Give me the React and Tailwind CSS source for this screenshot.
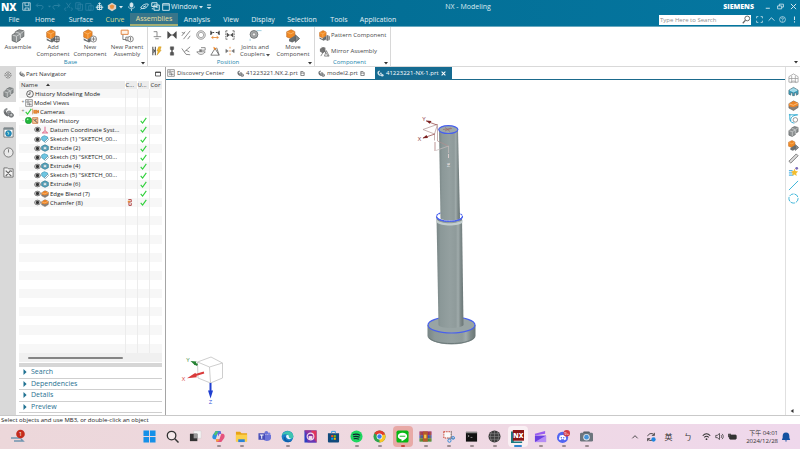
import React from "react";

/* ---------- drawing helpers ---------- */
function Ic({ s = "size-3", children }) {
  return (
    <svg viewBox="0 0 12 12" className={`${s} shrink-0`} fill="none" stroke="currentColor" strokeWidth="1" aria-hidden="true">
      {children}
    </svg>
  );
}
const Caret = ({ c = "size-1" }) => (
  <svg viewBox="0 0 4 4" className={`${c} shrink-0`} fill="currentColor" aria-hidden="true"><path d="M0 1h4L2 3.4z" /></svg>
);
const Bracket = ({ s }) => (
  <Ic s={s}>
    <path d="M4.500 1C1.500 1.600.4 3.600.8 5.600 1.200 8 3 9.600 5.400 10.400L7 8.800C5 8 3.800 6.800 3.400 5.200 3.200 4 3.800 3 5 2.600z" fill="#6b6e70" stroke="none" />
    <ellipse cx="6.600" cy="6" rx="2.200" ry="1.700" fill="#9a9d9f" stroke="#5d6062" strokeWidth=".700" />
    <ellipse cx="9" cy="9" rx="2.500" ry="2.200" fill="#85888a" stroke="#5d6062" strokeWidth=".700" />
    <ellipse cx="9" cy="8.600" rx="1.100" ry=".800" fill="#e6e8e8" stroke="none" />
    <path d="M2 5c0-1.400.8-2.400 2.200-2.900" stroke="#c8cccd" strokeWidth=".700" />
  </Ic>
);
const GreyPart = ({ s }) => (
  <Ic s={s}>
    <path d="M1 5l2.600-1.400V2.400L7 .6l4 1v4.800L8 8v1.400L4.600 11.400 1 10z" fill="#8d9192" stroke="#5d6162" strokeWidth=".7" />
    <path d="M1.300 5.200l3.400 1 3.300-2 3-2.400M4.700 6.400v4.600M8 4.400v4.200M3.800 2.600l3.400 1v1" stroke="#d9dcdc" strokeWidth=".7" />
  </Ic>
);
const OrangePart = ({ s, star }) => (
  <Ic s={s}>
    <path d="M.6 2.6L4.4.6l3.4 1.6v4L4.2 8.6.6 7z" fill="#f08a24" stroke="#b8601a" strokeWidth=".5" />
    <path d="M.8 2.800l3.400 1.400 3.400-2M4.200 4.200v4" stroke="#fbc07c" strokeWidth=".6" />
    <path d="M.6 8l3.400 2V8.800l4-2.200L9 7v2L5.200 11.600.6 9.600z" fill="#6b6f70" stroke="none" />
    {star ? (
      <><circle cx="9" cy="8.600" r="2.600" fill="#f6f6f6" stroke="#777" strokeWidth=".7" /><path d="M9 6.800v3.600M7.200 8.600h3.600" stroke="#666" strokeWidth=".6" /></>
    ) : (
      <path d="M7.400 6.600h3.800v4.200H7.400zM9.300 5.600v6.200M6.400 8.700h5.400" fill="#e8e8e8" stroke="#555" strokeWidth=".7" />
    )}
  </Ic>
);
const MovePart = ({ s }) => (
  <Ic s={s}>
    <path d="M.6 2.400L4.400.6l3.200 1.600v4L4.200 8.200.6 6.800z" fill="#f08a24" stroke="#b8601a" strokeWidth=".5" />
    <path d="M.8 2.600l3.400 1.600 3.200-2" stroke="#fbc07c" strokeWidth=".6" />
    <path d="M2.600 8.800l4.400-2.800 1.600.6v3L5.400 11.600 2.600 10.600z" fill="#6b6f70" stroke="none" />
    <path d="M8 5l3.600 3.200L8 11.400z" fill="#8a8e8f" stroke="#4b4f50" strokeWidth=".6" />
  </Ic>
);
const PlainOrange = ({ s }) => (
  <Ic s={s}>
    <path d="M1 4l5-3 5 2.400v4.800L6 11.400 1 8.800z" fill="#8a8078" stroke="#5e5650" strokeWidth=".6" />
    <path d="M1 4l5-3 5 2.400v3L5.600 8 1 6.800z" fill="#ee8526" stroke="none" />
    <path d="M1.400 4.200l4.400 1.600 5-2.400" stroke="#ffd09a" strokeWidth=".8" />
  </Ic>
);
const Eye = () => (
  <Ic s="size-[7px]">
    <ellipse cx="6" cy="6" rx="5" ry="4" fill="#e0e0e0" stroke="#555" strokeWidth="1.200" />
    <circle cx="6" cy="6" r="2.800" fill="#333" stroke="none" />
  </Ic>
);
const Check = () => (
  <Ic s="size-[7px]"><path d="M1.200 6.600l3.200 3.800L10.800 1.400" stroke="#2fd03a" strokeWidth="1.900" /></Ic>
);
const SketchI = () => (
  <Ic s="size-2">
    <path d="M1 3l4-2 5 2v4L5 10 1 7z" fill="#6fc6e2" stroke="#2385a8" strokeWidth=".8" />
    <path d="M5 10l5-5 1.400 1.600-4.600 4.600z" fill="#fff" stroke="#3a6f86" strokeWidth=".8" />
  </Ic>
);
const ExtrudeI = () => (
  <Ic s="size-2">
    <path d="M1 3.600l5-2.400 5 2.400v5L6 11 1 8.600z" fill="#4ea9c6" stroke="#2d6f86" strokeWidth="1" />
    <path d="M3.500 5l2.500-1.200L8.500 5v2.400L6 8.600 3.500 7.400z" fill="#d7eef5" stroke="#6d7d84" strokeWidth=".8" />
  </Ic>
);
const DatumI = () => (
  <Ic s="size-2"><path d="M6 1v6M6 7l-4 3.400M6 7l4 3.400M2 10.400h8" stroke="#d8476f" strokeWidth="1.200" /></Ic>
);
const SquareSmile = () => (
  <Ic s="size-2">
    <path d="M1 1h10v10H1z" stroke="#666" />
    <path d="M3 3h3v3H3zM7 4h3M3 8h7M7 6v4" stroke="#666" />
  </Ic>
);

/* ---------- title bar ---------- */
const menu = [
  ["File", "w-7"], ["Home", "w-[34px]"], ["Surface", "w-[38px]"], ["Curve", "w-[30px]"], ["Assemblies", "w-12"],
  ["Analysis", "w-[38px]"], ["View", "w-[30px]"], ["Display", "w-[34px]"], ["Selection", "w-11"], ["Tools", "w-[30px]"], ["Application", "w-12"],
];
function QBtn({ w = "w-[11px]", label, dim, children }) {
  return (
    <button aria-label={label} className={`${w} flex h-3 items-center justify-center ${dim ? "text-[#2f83a5]" : "text-[#d5e8ef]"}`}>
      {children}
    </button>
  );
}
function Header() {
  return (
    <header className="border-b border-[#69a9bf] bg-linear-to-r from-[#00658a] via-[#036f96] to-[#0577a1] text-white">
      <div className="relative flex h-[13px] items-center">
        <span className="w-[21px] pl-px text-[10px] leading-3 font-extrabold">NX</span>
        <QBtn label="Save"><Ic s="size-[9px]"><path d="M1 1h10v10H1zM4 1v4h5V1M4 11V8h5v3" /></Ic></QBtn>
        <QBtn w="w-[15px]" label="Undo" dim><Ic s="size-[9px]"><path d="M4 2L1.600 4.600 4 7M2 4.600h6c4 0 3 5 0 5" strokeWidth="1.200" /></Ic></QBtn>
        <QBtn w="w-1" label="Undo list" dim><Caret c="size-[3px]" /></QBtn>
        <QBtn label="Redo" dim><Ic s="size-[9px]"><path d="M8 2l2.400 2.600L8 7M10 4.600H4c-4 0-3 5 0 5" strokeWidth="1.200" /></Ic></QBtn>
        <QBtn w="w-3" label="Cut" dim><Ic s="size-[9px]"><path d="M9 1L4 8M3 1l5 7M3 8a1.600 1.600 0 100 3M9 8a1.600 1.600 0 110 3" /></Ic></QBtn>
        <QBtn w="w-[10px]" label="Copy" dim><Ic s="size-[9px]"><path d="M1 1h6v8H1zM4 3h6v8H4z" /></Ic></QBtn>
        <QBtn w="w-[10px]" label="Paste" dim><Ic s="size-[9px]"><path d="M1 2h7v9H1zM5 5h6v6H5z" /></Ic></QBtn>
        <QBtn w="w-[10px]" label="Move"><Ic s="size-[9px]"><path d="M6 1v10M1 7h10M4 3l2-2 2 2M3 5h6v5H3z" strokeWidth="1.300" /></Ic></QBtn>
        <QBtn w="w-[15px]" label="Touch mode">
          <Ic s="size-[10px]"><path d="M1 4l5-3 5 3v4l-5 3-5-3z" fill="#dcd0c2" stroke="none" /><path d="M3 4.600L6 3l3 1.600L7.600 8H4.400z" fill="#e8903f" stroke="none" /></Ic>
        </QBtn>
        <QBtn w="w-1" label="Mode list"><Caret c="size-[4px]" /></QBtn>
        <QBtn w="w-4" label="Voice"><Ic s="size-[9px]"><rect x="4" y="1" width="4" height="6" rx="2" fill="currentColor" /><path d="M2 6c0 4 8 4 8 0M6 9v3" /></Ic></QBtn>
        <QBtn label="Erase"><Ic s="size-[9px]"><path d="M1 8c2-5 8-6 10-5-1 5-7 7-10 5zM4 7l4-2M1 10l2-2" strokeWidth="1.300" /></Ic></QBtn>
        <QBtn label="Switch window"><Ic s="size-[9px]"><path d="M1 1h7v5H1zM4 4h7v7H4zM6 7h3M1 9h2" strokeWidth="1.300" /></Ic></QBtn>
        <button className="flex h-3 items-center gap-px pl-px text-[7px] leading-3 text-[#e4f0f4]">
          <Ic s="size-[8px]"><path d="M1 1h10v10H1zM1 3h10" strokeWidth="1.300" /></Ic>Window
        </button>
        <QBtn w="w-2" label="Window list"><Caret c="size-[4px]" /></QBtn>
        <QBtn w="w-2" label="Customize"><Ic s="size-[6px]"><path d="M2 2h8" strokeWidth="2" /><path d="M1 6h10L6 10z" fill="currentColor" stroke="none" /></Ic></QBtn>
        <h1 className="pointer-events-none absolute inset-x-0 pl-[136px] text-center text-[7px] leading-[13px] text-[#dcebf1]">NX - Modeling</h1>
        <div className="ml-auto flex items-center">
          <span className="mr-[7px] text-[7px] leading-3 font-extrabold">SIEMENS</span>
          <QBtn w="w-[13px]" label="Minimize"><Ic s="size-[7px]"><path d="M3 9h7" strokeWidth="1.600" /></Ic></QBtn>
          <QBtn w="w-[13px]" label="Restore"><Ic s="size-[7px]"><path d="M1 5h7v5H1zM4 5V2h7v5H8" strokeWidth="1.400" /></Ic></QBtn>
          <QBtn w="w-[13px]" label="Close"><Ic s="size-[7px]"><path d="M1.500 1.500l9 9M10.500 1.500l-9 9" strokeWidth="1.700" /></Ic></QBtn>
        </div>
      </div>
      <div className="flex h-[13px] items-center">
        <nav className="flex h-full">
          {menu.map(([m, w]) => (
            <button key={m} className={`${w} text-center text-[7px] ${
              m === "Assemblies" ? "border-b-2 border-[#a3ad72] bg-[#37758a] leading-[11px] text-[#e8dfa0]" : m === "Curve" ? "leading-[13px] text-[#dcd98f]" : "leading-[13px] text-[#e3f0f5]"}`}>{m}</button>
          ))}
        </nav>
        <label className="ml-auto flex h-[10px] w-[92px] items-center bg-white text-[#666]">
          <input aria-label="Type Here to Search" placeholder="Type Here to Search" className="w-0 flex-1 pl-px text-[6px] leading-[10px] outline-none placeholder:text-[#8f8f8f]" />
          <Ic s="size-[9px]"><circle cx="7" cy="4.600" r="3.200" strokeWidth="1.300" /><path d="M4.600 7L1 11" strokeWidth="1.500" /></Ic>
        </label>
        <div className="flex w-[49px] pl-[3px]">
          <QBtn label="Full screen"><Ic s="size-[7px]"><path d="M1 4V1h3M8 1h3v3M11 8v3H8M4 11H1V8" strokeWidth="1.300" /></Ic></QBtn>
          <QBtn w="w-3" label="Collapse ribbon"><Ic s="size-[7px]"><path d="M1 8l5-5 5 5" strokeWidth="1.500" /></Ic></QBtn>
          <QBtn w="w-[11px]" label="Help"><Ic s="size-[7px]"><circle cx="6" cy="6" r="5" strokeWidth="1.200" /><path d="M4.200 4.600c.4-2 3.800-1.600 3.400.4L6 6.600v1M6 8.500v1" strokeWidth="1.200" /></Ic></QBtn>
          <QBtn w="w-3" label="Alerts"><Ic s="size-[7px]"><path d="M6 1v6M6 9v2" strokeWidth="1.800" /></Ic></QBtn>
        </div>
      </div>
    </header>
  );
}

/* ---------- ribbon ---------- */
function Big({ w, icon, lines, drop }) {
  return (
    <button className={`${w} flex flex-col items-center pt-px text-[6px] leading-[7px] text-[#4a4a4a]`}>
      <span className="mb-px flex h-[15px] items-center">{icon}</span>
      {lines.map((l, i) => (
        <span key={l} className="flex items-center gap-px whitespace-nowrap">{l}{drop && i === 1 && <Caret />}</span>
      ))}
    </button>
  );
}
const bow = "M1 2l4 4-4 4zM11 2L7 6l4 4z";
const constraints = [
  ["Distance", <path d="M2 2h4v6M2 8h9M4 10.500h4" stroke="#777" />],
  ["Align", <><path d={bow} fill="#4a4a4a" stroke="#4a4a4a" /><path d="M4 6h4" /></>],
  ["Parallel", <path d="M1 7l4-5M8 11l3-4M3 11l8-10M1 3l3 1" stroke="#777" />],
  ["Concentric", <><circle cx="6" cy="6" r="5" stroke="#777" /><circle cx="6" cy="6" r="3.200" stroke="#999" /></>],
  ["Center", <><path d="M1 1v5M11 1v5M3 3h2M7 3h2M2 5V2M10 5V2" stroke="#444" strokeWidth="1.300" /><path d="M2 9h8M4 7.500L2 9l2 1.500M8 7.500L10 9l-2 1.500" stroke="#e8862c" /></>],
  ["Fit", <><path d="M1 1v10M11 1v10M1 1h2M9 1h2M1 11h2M9 11h2" stroke="#555" strokeDasharray="2 1" /><path d="M2.500 3.500L5 6 2.500 8.500zM9.500 3.500L7 6l2.500 2.500zM4 6h4" fill="#444" stroke="#444" strokeWidth=".600" /></>],
  ["Bond", <><path d="M1 1v10M4 1v10M1 4l3 2-3 2" stroke="#555" strokeWidth="1.300" /><path d="M8 1h3L9.600 5H11L6 11l1.400-5H6z" fill="#f2b62c" stroke="#c28a12" strokeWidth=".500" /></>],
  ["Lock", <path d="M4 1h4v3L6 6 4 4zM4 11h4V8L6 6 4 8z" fill="#555" stroke="#555" strokeWidth=".600" />],
  ["Angle", <path d="M1 3l5 7 5 .5M4 7l7-6M6 5l4 2" stroke="#777" />],
  ["Tangent", <><path d="M1 7c2 4 8 4 10 0M1 7h10M6 2h5v3H7" stroke="#777" /><path d="M4 4h3v3H4z" fill="#777" stroke="none" /></>],
  ["Perpendicular", <><path d="M1 11l5-8 5 8zM8 2l3 9" stroke="#666" /><path d="M4 1l4 2-3 2z" fill="#e8862c" stroke="none" /></>],
  ["Symmetric", <><path d="M6 1v2M6 5v2M6 9v2" stroke="#e8862c" /><path d="M1 4l3 2-3 2zM11 4L8 6l3 2z" fill="#777" stroke="#777" strokeWidth=".600" /></>],
];
function Group({ w, title, children }) {
  return (
    <section className={`${w} flex flex-col border-r border-[#d8d8d8]`}>
      <div className="flex h-8 flex-none">{children}</div>
      <div className="flex items-center pr-0.5 text-[#333]">
        <h2 className="flex-1 text-center text-[6px] leading-[7px] text-[#1c86ad]">{title}</h2>
        <Caret />
      </div>
    </section>
  );
}
function Ribbon() {
  return (
    <div className="flex h-10 flex-none border-b border-[#d9d9d9] bg-white">
      <Group w="w-[148px]" title="Base">
        <Big w="w-9" icon={<GreyPart s="size-[14px]" />} lines={["Assemble"]} />
        <Big w="w-[34px]" icon={<OrangePart s="size-[14px]" />} lines={["Add", "Component"]} />
        <Big w="w-10" icon={<OrangePart s="size-[14px]" star />} lines={["New", "Component"]} />
        <Big w="w-[34px]" icon={
          <Ic s="size-[14px]"><path d="M1 1h6v3.600H1z" fill="#fff3e6" stroke="#e0803a" strokeWidth=".800" /><path d="M2.500 5v4h3M5 7h3v3H5z" stroke="#666" strokeWidth=".700" /><circle cx="9" cy="8.600" r="2.400" fill="#f6f6f6" stroke="#777" strokeWidth=".700" /><path d="M9 7v3" stroke="#666" strokeWidth=".700" /></Ic>
        } lines={["New Parent", "Assembly"]} />
      </Group>
      <Group w="w-[167px]" title="Position">
        <div className="ml-0.5 grid w-[87px] grid-cols-6 place-items-center text-[#555]">
          {constraints.map(([n, d]) => (
            <button key={n} aria-label={n}><Ic s="size-[10px]">{d}</Ic></button>
          ))}
        </div>
        <Big w="w-9" drop icon={<Ic s="size-[13px]"><circle cx="4.600" cy="5" r="3.600" fill="#a5a9aa" stroke="#6d7172" strokeWidth=".800" /><circle cx="4.600" cy="5" r="1.500" fill="#eee" stroke="#777" strokeWidth=".600" /><path d="M7 1.500h4.600M1 9v2" stroke="#9fd0e0" strokeWidth=".900" /></Ic>} lines={["Joints and", "Couplers"]} />
        <Big w="w-10" icon={<MovePart s="size-[14px]" />} lines={["Move", "Component"]} />
      </Group>
      <Group w="w-[76px]" title="Component">
        <div className="flex flex-col justify-around pl-1 text-[6px] leading-[10px] text-[#4a4a4a]">
          <button className="flex items-center gap-px whitespace-nowrap"><OrangePart s="size-[11px]" />Pattern Component</button>
          <button className="flex items-center gap-px whitespace-nowrap">
            <Ic s="size-[11px]"><path d="M1 3l4-2 2 1v4L4 8 1 6z" fill="#777" stroke="none" /><path d="M2 11l3-5M8 5l3 6H6zM3 1l7 10" stroke="#666" strokeWidth=".800" /></Ic>Mirror Assembly
          </button>
        </div>
      </Group>
      <div className="ml-auto flex flex-col justify-end pr-0.5 pb-0.5 text-[#333]"><Caret /></div>
    </div>
  );
}

/* ---------- resource bar and navigator ---------- */
function Rail() {
  const items = [
    ["Roles", "h-[15px]", <Ic s="size-2"><circle cx="6" cy="6" r="4.500" strokeDasharray="2 1" strokeWidth="1.400" /><circle cx="6" cy="6" r="2" /></Ic>],
    ["Assembly Navigator", "h-5", <GreyPart s="size-[11px]" />],
    ["Part Navigator", "h-5 bg-white", <Bracket s="size-[11px]" />],
    ["Web Browser", "h-5", <Ic s="size-[11px]"><path d="M1 1h10v10H1z" fill="#fff" stroke="#6c7476" /><path d="M1 1h10v2H1z" fill="#7b888c" stroke="none" /><circle cx="6" cy="7" r="3.200" fill="#1f8fc0" stroke="#136a92" strokeWidth=".600" /><path d="M4.500 5.500l2 1-1 2" stroke="#bfe6c9" /></Ic>],
    ["History", "h-5", <Ic s="size-[11px]"><circle cx="6" cy="6" r="5" fill="#e9e9e9" strokeWidth=".900" /><path d="M6 2.500V6" strokeWidth=".900" /></Ic>],
    ["Process Studio", "h-5", <Ic s="size-[11px]"><path d="M1 1h4l1 1h5v9H1z" fill="#f3f3f3" strokeWidth=".900" /><path d="M3 10l5-6M3 4l6 6M8 4l2 1" strokeWidth="1.300" /></Ic>],
  ];
  return (
    <aside className="flex w-4 flex-none flex-col bg-[#d9d9d9] text-[#666]">
      {items.map(([n, c, i]) => (
        <button key={n} aria-label={n} className={`${c} flex items-center justify-center`}>{i}</button>
      ))}
    </aside>
  );
}
const Box = ({ t }) => <span className="w-1 text-center text-[5px] leading-[5px] text-[#777]">{t}</span>;
const rows = [
  ["pl-[7px]", <Ic s="size-2"><circle cx="6" cy="6" r="5" /><path d="M6 3v3.500H3" /></Ic>, "History Modeling Mode", false],
  ["pl-0.5", <><Box t="+" /><SquareSmile /></>, "Model Views", false],
  ["pl-0.5", <><Box t="+" /><Check /><Ic s="size-[7px]"><path d="M1 1v10M3 4h6v5H3zM9 6l3-2v5z" fill="#f0923a" stroke="#c96b1c" /></Ic></>, "Cameras", false],
  ["pl-0.5", <><Box t="-" /><Ic s="size-[7px]"><circle cx="6" cy="6" r="5.500" fill="#22b83c" stroke="#118a28" /><circle cx="4.500" cy="4" r="1.500" fill="#a8efb2" stroke="none" /></Ic><Ic s="size-[7px]"><path d="M1 1h9v10H1z" fill="#f4c69a" stroke="#c55d1d" /><path d="M3 4l6 6M8 3L5 6" stroke="#444" strokeWidth="1.500" /></Ic></>, "Model History", true],
  ["pl-[15px]", <><Eye /><DatumI /></>, "Datum Coordinate Syst...", true],
  ["pl-[15px]", <><Eye /><SketchI /></>, "Sketch (1) \"SKETCH_00...", true],
  ["pl-[15px]", <><Eye /><ExtrudeI /></>, "Extrude (2)", true],
  ["pl-[15px]", <><Eye /><SketchI /></>, "Sketch (3) \"SKETCH_00...", true],
  ["pl-[15px]", <><Eye /><ExtrudeI /></>, "Extrude (4)", true],
  ["pl-[15px]", <><Eye /><SketchI /></>, "Sketch (5) \"SKETCH_00...", true],
  ["pl-[15px]", <><Eye /><ExtrudeI /></>, "Extrude (6)", true],
  ["pl-[15px]", <><Eye /><PlainOrange s="size-2" /></>, "Edge Blend (7)", true],
  ["pl-[15px]", <><Eye /><PlainOrange s="size-2" /></>, "Chamfer (8)", true],
];
function Navigator() {
  const blanks = Array.from({ length: 16 }, (_, i) => i);
  const line = "border-r border-[#ececec] p-0";
  return (
    <aside className="flex w-[150px] flex-none flex-col border-r border-[#a5a5a5] bg-white pr-[3px] pl-[3px]">
      <div className="flex h-[14px] flex-none items-center gap-px text-[#333]">
        <Bracket s="size-[6px]" />
        <h2 className="text-[6px] leading-[14px]">Part Navigator</h2>
        <button aria-label="Undock" className="mr-px ml-auto"><Ic s="size-[6px]"><path d="M1 2h10v8H1zM1 3h10" strokeWidth="1.500" /></Ic></button>
      </div>
      <table className="h-[272px] w-full flex-none table-fixed border-collapse text-[6px] leading-[8px] text-[#222]">
        <colgroup><col /><col className="w-3" /><col className="w-3" /><col className="w-[13px]" /></colgroup>
        <thead>
          <tr className="bg-[#ececec] text-left text-[#333]">
            <th className={`${line} border-white pl-0.5 font-normal`}><span className="flex items-center gap-2 leading-[8px]">Name <svg viewBox="0 0 4 4" className="size-1" fill="#333" aria-hidden="true"><path d="M0 3h4L2 .6z" /></svg></span></th>
            <th className={`${line} border-white font-normal`}>C...</th>
            <th className={`${line} border-white font-normal`}>U...</th>
            <th className="overflow-hidden p-0 pl-px font-normal">Cor</th>
          </tr>
        </thead>
        <tbody>
          {rows.map(([pad, icon, text, ok]) => (
            <tr key={text} className="odd:bg-[#f7f7f7]">
              <td className={line}>
                <span className={`${pad} flex h-[8px] items-center whitespace-nowrap`}>{icon}<span className="pl-px">{text}</span></span>
              </td>
              <td className={line}>{text === "Chamfer (8)" && <Ic s="size-[7px]"><path d="M4 1h5v4H5v6h4V7" stroke="#a33" strokeWidth="1.500" /><path d="M3 3h4v3H3z" fill="#e98b3a" stroke="none" /></Ic>}</td>
              <td className={line}>{ok && <span className="flex justify-center"><Check /></span>}</td>
              <td className="p-0" />
            </tr>
          ))}
          {blanks.map((b) => (
            <tr key={b} className="odd:bg-[#f7f7f7]"><td className={line}><div className="h-[8px]" /></td><td className={line} /><td className={line} /><td className="p-0" /></tr>
          ))}
        </tbody>
      </table>
      <div className="flex h-[9px] flex-none items-center bg-[#f0f0f0] pl-[9px]"><div className="h-0.5 w-[95px] rounded-full bg-[#858585]" /></div>
      <div className="mt-px h-1 flex-none bg-[#d6d6d6]" />
      <div className="flex flex-1 flex-col pb-0.5">
        {["Search", "Dependencies", "Details", "Preview"].map((s) => (
          <button key={s} className="flex flex-1 items-center gap-1 border-b border-[#cfcfcf] pl-1 text-[7px] leading-[10px] text-[#1f7191]">
            <svg viewBox="0 0 4 6" className="h-[6px] w-1" fill="currentColor" aria-hidden="true"><path d="M.5 0L3.600 3 .5 6z" /></svg>{s}
          </button>
        ))}
      </div>
    </aside>
  );
}

/* ---------- graphics window ---------- */
function DocTab({ w, icon, label, tail, active }) {
  return (
    <button className={`${w} flex h-full items-center gap-0.5 whitespace-nowrap text-[6px] leading-[12px] ${active ? "bg-[#156b91] pl-0.5 text-white" : "text-[#444]"}`}>
      {icon}<span>{label}</span>{tail}
    </button>
  );
}
const DocI = () => <Ic s="size-[5px]"><path d="M2 1h5l3 3v7H2zM2 5h8" strokeWidth="1.500" /></Ic>;

function Model() {
  return (
    <svg viewBox="166 80 619 335" className="h-full w-full" role="img" aria-label="Stepped pin model">
      <defs>
        <linearGradient id="steel" x1="0" x2="1" y1="0" y2="0">
          <stop offset="0" stopColor="#788585" /><stop offset=".15" stopColor="#8b9898" /><stop offset=".5" stopColor="#94a0a0" />
          <stop offset=".72" stopColor="#8f9b9b" /><stop offset=".8" stopColor="#a0abab" /><stop offset=".9" stopColor="#7d8989" /><stop offset="1" stopColor="#6a7676" />
        </linearGradient>
      </defs>
      <g>
        <path d="M427.500 325v11c0 4 10 8.500 24 8.500s24-4.500 24-8.500v-11z" fill="url(#steel)" />
        <path d="M429 338c5 4 12 5.500 22 5.500s18-1.500 23-5.500" fill="none" stroke="#6c7979" strokeWidth="1" />
        <ellipse cx="451.500" cy="325" rx="23.500" ry="8" fill="#98a4a4" stroke="#4860ee" strokeWidth="1.200" />
        <path d="M436.500 217l2 108c1 4 23 4 25 0l-1.500-108z" fill="url(#steel)" />
        <path d="M437 219.500c3 5 22 5 25.500 0v3c-3 4-22 4-25.500 0z" fill="#c3cece" />
        <ellipse cx="449.500" cy="216.500" rx="13" ry="4.800" fill="#fff" stroke="#4860ee" strokeWidth="1.100" strokeDasharray="2 .500" />
        <path d="M439 129.500l1.500 89c3 2.800 16 2.800 19.500 0l-2-89z" fill="url(#steel)" />
        <path d="M436.500 216.500c1 6.400 25 6.400 26 0" fill="none" stroke="#4860ee" strokeWidth="1.100" />
        <ellipse cx="448.300" cy="129.600" rx="9.600" ry="3.900" fill="#9da9a9" stroke="#4860ee" strokeWidth="1.200" />
      </g>
      <g fill="none" stroke="#b08f8f" strokeWidth=".7">
        <path d="M437 124.500l-14 5 11.500 4.500M434.500 134l2.500-8M437.500 124v17l11 5M434.500 134.500v6" />
        <path d="M436 150.500l12.500-4.500v7" stroke="#c5bcbc" />
        <path d="M435 151v-9M443 129.500l9-1M445 127.500l5 4M445 131l6-3" stroke="#a06b6b" />
        <path d="M437 125l-11-4M423 138l12-4" stroke="#8c3b3b" />
      </g>
      <path d="M426 120.500l5.500.600-1.800 2.600zM422.500 138.300l4-3.300 1.500 3z" fill="#7c2222" />
      <path d="M448.500 154v4M447.300 164.500h2.600" stroke="#d8cccc" strokeWidth="1" />
      <g fontFamily="Open Sans, sans-serif" fontSize="6" textAnchor="middle">
        <text x="424" y="121" fill="#8c3b3b">Y</text><text x="419.500" y="141" fill="#8c3b3b">X</text><text x="448.500" y="167" fill="#d3dada">Z</text>
        <text x="188" y="362" fill="#3f8f4a">Y</text><text x="183.500" y="381" fill="#d94545">X</text><text x="210.500" y="404" fill="#3252d8">Z</text>
      </g>
      <g fill="#fff" stroke="#c2c2c2" strokeWidth=".8">
        <path d="M197.500 362l13.500-5 11.500 6v15l-12 5-12.500-5z" /><path d="M197.500 362l12 5 13-4M209.500 367l1 16" fill="none" />
      </g>
      <path d="M204 372.500l-10 3" stroke="#d93a3a" strokeWidth="2" /><path d="M195.500 372.800l1.300 4.400-9.800 1z" fill="#d93a3a" />
      <path d="M197.500 365l-3-1.500" stroke="#278234" strokeWidth="2" /><path d="M190.500 361l6 .6-1.600 3.600z" fill="#278234" />
      <path d="M210.500 383v9" stroke="#1f3fd0" strokeWidth="2" /><path d="M208 390.500h5l-2.500 8z" fill="#1f3fd0" />
    </svg>
  );
}
function Side() {
  const items = [
    ["Wireframe", <Ic s="size-[11px]"><path d="M1 4l5-3 5 3v6H1zM1 6h10M4 3v7M8 3v7M3 11c1-3 5-3 6 0" stroke="#999" strokeWidth=".800" /></Ic>],
    ["Extrude", <Ic s="size-[11px]"><path d="M1 4.500l5-3 5 3V9l-2 1V7.500H7v3H5v-3H3V10L1 9z" fill="#3ba4c4" stroke="#4d6f7a" strokeWidth=".800" /><path d="M2 4.600l4-2 4 2-4 2z" fill="#9fdbea" stroke="#d8f0f6" strokeWidth=".600" /></Ic>],
    ["Block", <PlainOrange s="size-[11px]" />],
    ["Sketch", <Ic s="size-[11px]"><path d="M1 2h9M2 1v6c0 3 4 4 5 4M3 9c-1-5 4-7 8-7" stroke="#2aa6cf" /><circle cx="8" cy="7.500" r="2.500" fill="#fff" stroke="#777" strokeWidth=".800" /></Ic>],
    ["Assemble", <GreyPart s="size-[11px]" />],
    ["Add Component", <MovePart s="size-[11px]" />],
    ["Measure", <Ic s="size-[11px]"><path d="M1 9l8-8 2 2-8 8z" fill="#ddd" stroke="#555" strokeWidth=".800" /></Ic>],
    ["Effects", <Ic s="size-[11px]"><path d="M1 5h4M1 7.500h4M1 10h5" stroke="#5ab6e4" strokeWidth="1.400" /><path d="M7 3l1.200 2.400L11 6 9 7.800l.5 3L7 9.400l-2.500 1L5 8 3.500 6l2.500-.5z" fill="#f3bd2e" stroke="none" /><circle cx="9.500" cy="2.500" r="1.500" fill="#7a6bb8" stroke="none" /></Ic>],
    ["Line", <Ic s="size-[11px]"><path d="M1 11L11 1" stroke="#2fb0d6" /></Ic>],
    ["Circle", <Ic s="size-[11px]"><circle cx="6" cy="6" r="5" stroke="#2fb0d6" strokeDasharray="5 1" /></Ic>],
  ];
  return (
    <aside className="flex w-[15px] flex-none flex-col border-l border-[#e0e0e0] bg-white pt-[5px]">
      <div className="flex h-[133px] flex-col">
        {items.map(([n, i]) => (
          <button key={n} aria-label={n} className="flex flex-1 items-center justify-center">{i}</button>
        ))}
      </div>
      <svg viewBox="0 0 4 4" className="mt-auto mb-0.5 ml-1 size-1" aria-hidden="true"><path d="M3.500 0v4L.6 2z" fill="#333" /></svg>
    </aside>
  );
}

/* ---------- taskbar ---------- */
const T = ({ children }) => <svg viewBox="0 0 14 14" className="size-[13px]" aria-hidden="true">{children}</svg>;
const apps = [
  ["Start", "", <T><path d="M.5.500h6v6h-6zM7.500.500h6v6h-6zM.5 7.500h6v6h-6zM7.500 7.500h6v6h-6z" fill="#1590e8" /></T>],
  ["Search", "", <T><circle cx="6" cy="6" r="4.600" fill="#f4e8ea" stroke="#333" strokeWidth="1.400" /><path d="M9.500 9.500l4 4" stroke="#333" strokeWidth="1.600" /></T>],
  ["Task View", "", <T><path d="M5 1h8v8H5z" fill="#f5f5f5" stroke="#ccc" strokeWidth=".5" /><path d="M1 4h8v8H1z" fill="#333" /><path d="M5 4h4v5H5z" fill="#999" /></T>],
  ["Copilot", "g", <T><path d="M4 1h5l1 3H6L4 10H2C0 9 0 7 1 5z" fill="#2a8fe0" /><path d="M4 1L2 5l2 1 3-4z" fill="#56c46a" /><path d="M10 13H5L4 10h4l2-6h2c2 1 2 3 1 5z" fill="#e5527c" /><path d="M9 1l1 3H8L7 7 6 4z" fill="#7c5fd8" /><path d="M5 13l-1-3h3l1 1z" fill="#f3a23a" /></T>],
  ["File Explorer", "g", <T><path d="M1 2h4.500L7 3.500h6V12H1z" fill="#e8a317" /><path d="M1 5h12v7.500H1z" fill="#fbd04b" /><path d="M3.500 10h7v3h-7z" fill="#2a83d6" /></T>],
  ["Teams", "", <T><circle cx="9" cy="3" r="2" fill="#6b73d8" /><circle cx="12" cy="4" r="1.400" fill="#7c84e0" /><path d="M6 5h8v4c0 3-7 4-8 1z" fill="#6b73d8" /><path d="M.5 3.500h7v7h-7z" fill="#464eb8" /><path d="M2 5.500h4M4 5.500V9.500" stroke="#fff" strokeWidth="1.100" /></T>],
  ["Edge", "g", <T><circle cx="7" cy="7" r="6.300" fill="#1a7fc8" /><path d="M1 6c1-6 12-7 12.300 1 0 3-5 3-5 1 1-3-4-5-7.300-2z" fill="#3ec4b0" /><path d="M5 7c-1 4 3 6 7 4-3 4-10 2-9-3z" fill="#0f5ba6" /><path d="M5.500 7c0-2 3-2 3 0s1 2 3 2c-3 2-6 0-6-2z" fill="#e8f6fb" /></T>],
  ["Photo app", "", <T><path d="M.5.500h13v13H.5z" fill="#2b3fc0" /><path d="M.5.500L13.500.500V13.500z" fill="#e0345c" /><path d="M.5.500h7L13.500 13.500H4z" fill="#7a35b0" opacity=".8" /><circle cx="7" cy="7" r="3.600" fill="none" stroke="#f3dcea" strokeWidth="1.200" /><path d="M5 10V6.500h4V10z" fill="#f3dcea" /></T>],
  ["Store", "", <T><path d="M1 3.500h12V12c0 1-.5 1.500-1.500 1.500h-9C1.500 13.500 1 13 1 12z" fill="#124a7c" /><path d="M5 3.500V1.500h4v2" fill="none" stroke="#2f9be0" /><path d="M4.500 5.500h2.200v2.200H4.500z" fill="#f25022" /><path d="M7.300 5.500h2.200v2.200H7.300z" fill="#7fba00" /><path d="M4.500 8.300h2.200v2.200H4.500z" fill="#00a4ef" /><path d="M7.300 8.300h2.200v2.200H7.300z" fill="#ffb900" /></T>],
  ["Spotify", "g", <T><circle cx="7" cy="7" r="6.500" fill="#1ed760" /><path d="M3 5c3-1 6-.5 8 .8M3.500 7.300c2.500-.8 5-.4 6.800.6M4 9.500c2-.6 4-.3 5.500.5" fill="none" stroke="#123" strokeWidth="1.200" /></T>],
  ["Chrome", "g", <T><circle cx="7" cy="7" r="6.500" fill="#2da44e" /><path d="M7 7L1.400 3.800A6.500 6.500 0 0112.600 3.800z" fill="#e33b2e" /><path d="M7 7l5.600-3.200A6.500 6.500 0 017 13.500z" fill="#f9c626" /><path d="M7 4h6v1H7z" fill="#e33b2e" /><circle cx="7" cy="7" r="3.100" fill="#fff" /><circle cx="7" cy="7" r="2.400" fill="#3b7ded" /></T>],
  ["LINE", "line", <T><rect x=".5" y=".5" width="13" height="13" rx="2" fill="#06b814" /><path d="M7 3c-3 0-5 1.500-5 3.700 0 1.800 1.500 3 4 3.500V12c3-1.300 6-3 6-5.300C12 4.500 10 3 7 3z" fill="#fff" /><path d="M4 6.700h6" stroke="#06b814" strokeWidth="1" /></T>],
  ["WinRAR", "g", <T><path d="M.5 1.500h13v4H.5z" fill="#9c2c6a" /><path d="M.5 5.500h13v3.500H.5z" fill="#3457b8" /><path d="M.5 9h13v3.500H.5z" fill="#3b8f3d" /><path d="M4 1.500h5.500v11H4z" fill="#b2592a" /><path d="M5.500 5h2.500v4H5.500z" fill="#f0c850" /><path d="M2 2v10M12 2v10" stroke="#b8802a" strokeWidth=".8" /></T>],
  ["Snipping Tool", "g", <T><path d="M2 2h8v6.500H2z" fill="#fafafa" stroke="#c8402e" strokeWidth="1.100" strokeDasharray="1.500 1" /><path d="M10 1v9M6 9h7" stroke="#8a9097" strokeWidth="1" /><circle cx="8" cy="11.500" r="1.700" fill="none" stroke="#2a86d8" /><circle cx="12" cy="8.500" r="1.500" fill="none" stroke="#2a86d8" /></T>],
  ["Terminal", "g", <T><path d="M1 2h12v10.500H1z" fill="#111" /><path d="M1 2h12v1.500H1z" fill="#888" /><path d="M3 5.500l1.500 1L3 7.500M6 8h2" fill="none" stroke="#bbb" strokeWidth=".7" /></T>],
  ["Sphere", "g", <T><circle cx="7" cy="7" r="6.500" fill="#3d3d3d" /><path d="M1 7h12M2 4h10M2 10h10M7 1v12M4 2c-2 3-2 7 0 10M10 2c2 3 2 7 0 10" fill="none" stroke="#8b8b8b" strokeWidth=".6" /></T>],
  ["NX", "nx", <T><path d="M0 1.500h3v11h9v1.500H0z" fill="#1e7a80" /><path d="M2 0h12v11.500H2z" fill="#8c1414" /><text x="8" y="8.500" fontSize="7" fontWeight="800" textAnchor="middle" fill="#fff" fontFamily="Open Sans, sans-serif">NX</text></T>],
  ["Clipchamp", "g", <T><path d="M1 4l11-3v3L1 6z" fill="#9a5cf0" /><path d="M1 6h12v7H1z" fill="#6b3ee0" /><path d="M1 13L13 6v7z" fill="#b58cf5" /></T>],
  ["Discord", "g", <T><circle cx="6" cy="8" r="6" fill="#5165f2" /><path d="M3 6c2-1 4-1 6 0l1 4-2 1-.5-1h-3L4 11l-2-1z" fill="#fff" /><circle cx="4.700" cy="8.300" r=".8" fill="#5165f2" /><circle cx="7.300" cy="8.300" r=".8" fill="#5165f2" /><circle cx="10.500" cy="3.500" r="3.500" fill="#d33a45" /><text x="10.500" y="5.200" fontSize="4.500" textAnchor="middle" fill="#fff" fontFamily="Open Sans, sans-serif">9+</text></T>],
  ["Camera", "g", <T><path d="M4 1.500h6l1 2H3z" fill="#555c63" /><rect x="0" y="3" width="14" height="9.500" rx="1.500" fill="#6c757d" /><circle cx="7" cy="7.700" r="3.500" fill="#dfe6ec" /><circle cx="7" cy="7.700" r="2.500" fill="#4693d8" /></T>],
];
const mark = { "": "w-1 bg-transparent", g: "w-1 bg-[#9b8b90]", line: "w-1 bg-[#c8453a]", nx: "w-2 bg-[#2f86cf]" };
const tile = { "": "", g: "", line: "bg-[#e8a9a6]", nx: "bg-[#faf0f4]" };

function Taskbar() {
  return (
    <footer className="flex h-[25px] flex-none items-stretch bg-linear-to-r from-[#ecd7da] via-[#efd9e1] to-[#efd8ec]">
      <button aria-label="Widgets, 1 new" className="flex w-[138px] items-center pl-[10px]">
        <svg viewBox="0 0 16 16" className="size-4" aria-hidden="true">
          <path d="M1 9h9l-2-2M4 12h9l-2-2" fill="none" stroke="#6f95b0" strokeWidth="1.500" /><circle cx="10.500" cy="5" r="4.300" fill="#c42b1c" />
          <text x="10.500" y="7.200" fontSize="6" textAnchor="middle" fill="#fff" fontFamily="Open Sans, sans-serif">1</text>
        </svg>
      </button>
      <nav className="flex">
        {apps.map(([n, k, i]) => (
          <button key={n} aria-label={n} className="flex w-[23px] items-center justify-center">
            <span className={`${tile[k]} flex h-[21px] w-5 flex-col items-center justify-between rounded-sm pt-1`}>{i}<span className={`${mark[k]} h-0.5 rounded-full`} /></span>
          </button>
        ))}
      </nav>
      <div className="ml-auto flex items-center pr-[9px] text-[#333]">
        <button aria-label="Hidden icons" className="flex w-4 justify-center"><Ic s="size-2"><path d="M2 8l4-4 4 4" strokeWidth="1.300" /></Ic></button>
        <button aria-label="Sync" className="flex w-4 justify-center"><Ic s="size-[10px]"><path d="M2 5c1-4 7-4 8-1M10 1v3H7M10 7c-1 4-7 4-8 1M2 11V8h3" /><circle cx="9" cy="9" r="2.600" fill="#1e86e0" stroke="none" /></Ic></button>
        <button className="w-[19px] text-center text-[8px] leading-[10px]">英</button>
        <button className="w-5 text-center text-[8px] leading-[10px]">ㄅ</button>
        <button aria-label="Network, volume and battery" className="flex w-[43px] items-center justify-center gap-1">
          <Ic s="size-[9px]"><path d="M1 5c3-3.500 7-3.500 10 0M3 7.200c2-2 4-2 6 0" strokeWidth="1.400" /><circle cx="6" cy="9.500" r="1.200" fill="currentColor" stroke="none" /></Ic>
          <Ic s="size-[9px]"><path d="M1 4.500h2L6 2v8L3 7.500H1zM8 4c1 1 1 3 0 4M9.500 2.500c2 2 2 5 0 7" /></Ic>
          <Ic s="size-[9px]"><rect x="2" y="4" width="9" height="5.500" rx="1" fill="currentColor" /><path d="M1 7V3h3" strokeWidth="1.500" /></Ic>
        </button>
        <button className="w-[37px] text-right text-[6px] leading-[8px] whitespace-nowrap">下午 04:01<br />2024/12/28</button>
        <button aria-label="Notifications" className="flex w-[13px] justify-end"><Ic s="size-[10px]"><path d="M6 .5c-3 0-4 2-4 4.500V7L1 9.500h10L10 7V5C10 2.500 9 .5 6 .5zM4.500 10.300h3L6 11.800z" fill="#1450a0" stroke="none" /></Ic></button>
      </div>
    </footer>
  );
}

export default function App() {
  return (
    <div className="flex h-screen flex-col overflow-hidden bg-white font-['Open_Sans','Noto_Sans_CJK_TC',sans-serif]">
      <Header />
      <Ribbon />
      <div className="flex min-h-0 flex-1">
        <Rail />
        <Navigator />
        <main className="flex min-w-0 flex-1 flex-col">
          <div className="flex h-[13px] flex-none items-center border-b border-[#1b6a8c] pl-px">
            <DocTab w="w-[70px]" icon={<SquareSmile />} label="Discovery Center" />
            <DocTab w="w-[81px]" icon={<Bracket s="size-[7px]" />} label="41223221.NX.2.prt" tail={<DocI />} />
            <DocTab w="w-[57px]" icon={<Bracket s="size-[7px]" />} label="model2.prt" tail={<DocI />} />
            <DocTab w="w-[77px]" active icon={<Ic s="size-[7px]"><path d="M4.500 1C1.500 1.600.4 3.600.8 5.600 1.200 8 3 9.600 5.400 10.400L7 8.800C5 8 3.800 6.800 3.400 5.200 3.200 4 3.800 3 5 2.600z" fill="#cfe0e8" stroke="none" /><circle cx="6.600" cy="6" r="1.800" fill="#b7d0dc" stroke="none" /><circle cx="9" cy="9" r="2.300" fill="#cfe0e8" stroke="none" /></Ic>} label="41223221-NX-1.prt" tail={<Ic s="size-[5px]"><path d="M1.500 1.500l9 9M10.500 1.500l-9 9" strokeWidth="2.500" /></Ic>} />
          </div>
          <div className="min-h-0 flex-1"><Model /></div>
        </main>
        <Side />
      </div>
      <div className="h-[9px] flex-none border-t border-[#c9c9c9] bg-white pl-px text-[6px] leading-[8px] text-[#222]">Select objects and use MB3, or double-click an object</div>
      <Taskbar />
    </div>
  );
}
